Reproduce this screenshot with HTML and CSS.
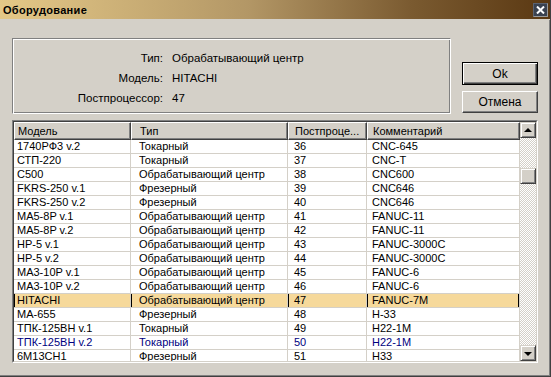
FILE: index.html
```html
<!DOCTYPE html>
<html lang="ru">
<head>
    <meta charset="UTF-8">
    <title>Оборудование</title>
    <link rel="stylesheet" href="styles.css">
</head>
<body>
    <div class="window">
        <div class="titlebar">
            <span class="title">Оборудование</span>
            <span class="close">
                <svg width="9" height="8" viewBox="0 0 9 8"><path d="M1 0.5 L8 7.5 M8 0.5 L1 7.5" stroke="#fff" stroke-width="2"/></svg>
            </span>
        </div>

        <div class="content">
            <div class="top">
                <div class="info">
                    <span class="label">Тип:</span><span>Обрабатывающий центр</span>
                    <span class="label">Модель:</span><span>HITACHI</span>
                    <span class="label">Постпроцессор:</span><span>47</span>
                </div>
                <div class="buttons">
                    <button class="btn default">Ok</button>
                    <button class="btn">Отмена</button>
                </div>
            </div>

            <div class="grid">
                <div class="grid-inner">
                    <div class="grid-main">
                        <table class="list">
                            <colgroup>
                                <col style="width:117px">
                                <col style="width:157px">
                                <col style="width:79px">
                                <col style="width:153px">
                            </colgroup>
                            <thead>
                                <tr>
                                    <th class="c1">Модель</th>
                                    <th class="c2">Тип</th>
                                    <th class="c3">Постпроце...</th>
                                    <th class="c4">Комментарий</th>
                                </tr>
                            </thead>
                            <tbody>
                                <tr><td class="c1">1740РФ3 v.2</td><td class="c2">Токарный</td><td class="c3">36</td><td class="c4">CNC-645</td></tr>
                                <tr><td class="c1">СТП-220</td><td class="c2">Токарный</td><td class="c3">37</td><td class="c4">CNC-T</td></tr>
                                <tr><td class="c1">C500</td><td class="c2">Обрабатывающий центр</td><td class="c3">38</td><td class="c4">CNC600</td></tr>
                                <tr><td class="c1">FKRS-250 v.1</td><td class="c2">Фрезерный</td><td class="c3">39</td><td class="c4">CNC646</td></tr>
                                <tr><td class="c1">FKRS-250 v.2</td><td class="c2">Фрезерный</td><td class="c3">40</td><td class="c4">CNC646</td></tr>
                                <tr><td class="c1">MA5-8P v.1</td><td class="c2">Обрабатывающий центр</td><td class="c3">41</td><td class="c4">FANUC-11</td></tr>
                                <tr><td class="c1">MA5-8P v.2</td><td class="c2">Обрабатывающий центр</td><td class="c3">42</td><td class="c4">FANUC-11</td></tr>
                                <tr><td class="c1">HP-5 v.1</td><td class="c2">Обрабатывающий центр</td><td class="c3">43</td><td class="c4">FANUC-3000C</td></tr>
                                <tr><td class="c1">HP-5 v.2</td><td class="c2">Обрабатывающий центр</td><td class="c3">44</td><td class="c4">FANUC-3000C</td></tr>
                                <tr><td class="c1">MA3-10P v.1</td><td class="c2">Обрабатывающий центр</td><td class="c3">45</td><td class="c4">FANUC-6</td></tr>
                                <tr><td class="c1">MA3-10P v.2</td><td class="c2">Обрабатывающий центр</td><td class="c3">46</td><td class="c4">FANUC-6</td></tr>
                                <tr class="selected"><td class="c1">HITACHI</td><td class="c2">Обрабатывающий центр</td><td class="c3">47</td><td class="c4">FANUC-7M</td></tr>
                                <tr><td class="c1">MA-655</td><td class="c2">Фрезерный</td><td class="c3">48</td><td class="c4">H-33</td></tr>
                                <tr><td class="c1">ТПК-125ВН v.1</td><td class="c2">Токарный</td><td class="c3">49</td><td class="c4">H22-1M</td></tr>
                                <tr class="marked"><td class="c1">ТПК-125ВН v.2</td><td class="c2">Токарный</td><td class="c3">50</td><td class="c4">H22-1M</td></tr>
                                <tr><td class="c1">6M13CH1</td><td class="c2">Фрезерный</td><td class="c3">51</td><td class="c4">H33</td></tr>
                            </tbody>
                        </table>
                    </div>
                    <div class="scrollbar">
                        <div class="sb-btn"><span class="arrow-up"></span></div>
                        <div class="sb-track">
                            <div class="sb-thumb"></div>
                        </div>
                        <div class="sb-btn"><span class="arrow-down"></span></div>
                    </div>
                </div>
            </div>
        </div>
    </div>
</body>
</html>
```

FILE: styles.css
```css
body {
    margin: 0;
    font-family: "Liberation Sans", Arial, sans-serif;
    font-size: 11px;
    color: #000;
}

.window {
    width: 551px;
    height: 377px;
    box-sizing: border-box;
    background-color: #d4d0c8;
    border-right: 1px solid #404040;
    border-bottom: 1px solid #404040;
    box-shadow: inset -1px -1px 0 #808080;
    display: flex;
    flex-direction: column;
}

.titlebar {
    height: 19px;
    display: flex;
    align-items: center;
    justify-content: space-between;
    padding: 0 2px 0 3px;
    background: linear-gradient(to right, #e4c887, #b39766 45%, #7a5a30 75%, #5a3812);
    border-bottom: 1px solid #d4d0c8;
}

.title {
    font-weight: bold;
    font-size: 11px;
    letter-spacing: 0.3px;
}

.close {
    width: 13px;
    height: 12px;
    background-color: #3a4250;
    border: 1px solid;
    border-color: #5a6270 #9a9a9a #9a9a9a #5a6270;
    display: flex;
    align-items: center;
    justify-content: center;
}

.content {
    padding: 18px 12px 0 12px;
}

.top {
    display: flex;
    gap: 11px;
}

.info {
    width: 440px;
    height: 76px;
    box-sizing: border-box;
    border: 1px solid;
    border-color: #808080 #fff #fff #808080;
    box-shadow: inset 1px 1px 0 #fff, inset -1px -1px 0 #808080;
    display: grid;
    grid-template-columns: 150px auto;
    grid-auto-rows: 20px;
    column-gap: 9px;
    align-content: start;
    padding-top: 9px;
    font-size: 11.5px;
    line-height: 20px;
}

.label {
    text-align: right;
}

.buttons {
    display: flex;
    flex-direction: column;
    gap: 6px;
    padding-top: 24px;
}

.btn {
    width: 76px;
    height: 22px;
    padding: 0;
    font-family: "Liberation Sans", Arial, sans-serif;
    font-size: 12px;
    color: #000;
    background-color: #d4d0c8;
    border: 1px solid;
    border-color: #fff #404040 #404040 #fff;
    box-shadow: inset -1px -1px 0 #808080;
}

.btn.default {
    height: 23px;
    border: 1px solid #000;
    box-shadow: inset 1px 1px 0 #fff, inset -1px -1px 0 #404040, inset -2px -2px 0 #808080;
}

.grid {
    margin-top: 6px;
    height: 243px;
    box-sizing: border-box;
    border: 1px solid;
    border-color: #808080 #fff #fff #808080;
}

.grid-inner {
    height: 100%;
    box-sizing: border-box;
    border: 1px solid;
    border-color: #404040 #d4d0c8 #d4d0c8 #404040;
    background-color: #fff;
    display: flex;
}

.grid-main {
    flex: 1;
    overflow: hidden;
}

.list {
    table-layout: fixed;
    border-collapse: separate;
    border-spacing: 0;
    width: 506px;
}

.list th {
    height: 18px;
    padding: 0;
    box-sizing: border-box;
    font-weight: normal;
    text-align: left;
    line-height: 16px;
    background-color: #d4d0c8;
    border-top: 1px solid #fff;
    border-left: 1px solid #fff;
    border-right: 1px solid #404040;
    border-bottom: 1px solid #404040;
    box-shadow: inset -1px -1px 0 #808080;
    white-space: nowrap;
    overflow: hidden;
}

.list td {
    height: 14px;
    padding: 0;
    box-sizing: border-box;
    line-height: 13px;
    border-right: 1px solid #d4d0c8;
    border-bottom: 1px solid #d4d0c8;
    white-space: nowrap;
    overflow: hidden;
}

.c1 { padding-left: 3px !important; }
.c2 { padding-left: 8px !important; }
.c3 { padding-left: 6px !important; }
.c4 { padding-left: 5px !important; }

.list .selected td {
    background-color: #f6d99b;
    box-shadow: inset 1px 0 0 #000;
}

.list .selected td.c4 {
    box-shadow: inset 1px 0 0 #000, inset -1px 0 0 #000;
}

.list .marked td {
    color: #000080;
}

.scrollbar {
    width: 16px;
    display: flex;
    flex-direction: column;
}

.sb-btn {
    width: 16px;
    height: 16px;
    box-sizing: border-box;
    background-color: #d4d0c8;
    border: 1px solid;
    border-color: #d4d0c8 #404040 #404040 #d4d0c8;
    box-shadow: inset 1px 1px 0 #fff, inset -1px -1px 0 #808080;
    display: flex;
    align-items: center;
    justify-content: center;
}

.arrow-up {
    width: 0;
    height: 0;
    border-left: 4px solid transparent;
    border-right: 4px solid transparent;
    border-bottom: 4px solid #000;
    margin-top: -1px;
}

.arrow-down {
    width: 0;
    height: 0;
    border-left: 4px solid transparent;
    border-right: 4px solid transparent;
    border-top: 4px solid #000;
    margin-top: 1px;
}

.sb-track {
    flex: 1;
    padding-top: 30px;
    background: repeating-conic-gradient(#d4d0c8 0 25%, #fff 0 50%) 0 0 / 2px 2px;
}

.sb-thumb {
    width: 16px;
    height: 16px;
    box-sizing: border-box;
    background-color: #d4d0c8;
    border: 1px solid;
    border-color: #d4d0c8 #404040 #404040 #d4d0c8;
    box-shadow: inset 1px 1px 0 #fff, inset -1px -1px 0 #808080;
}
```
